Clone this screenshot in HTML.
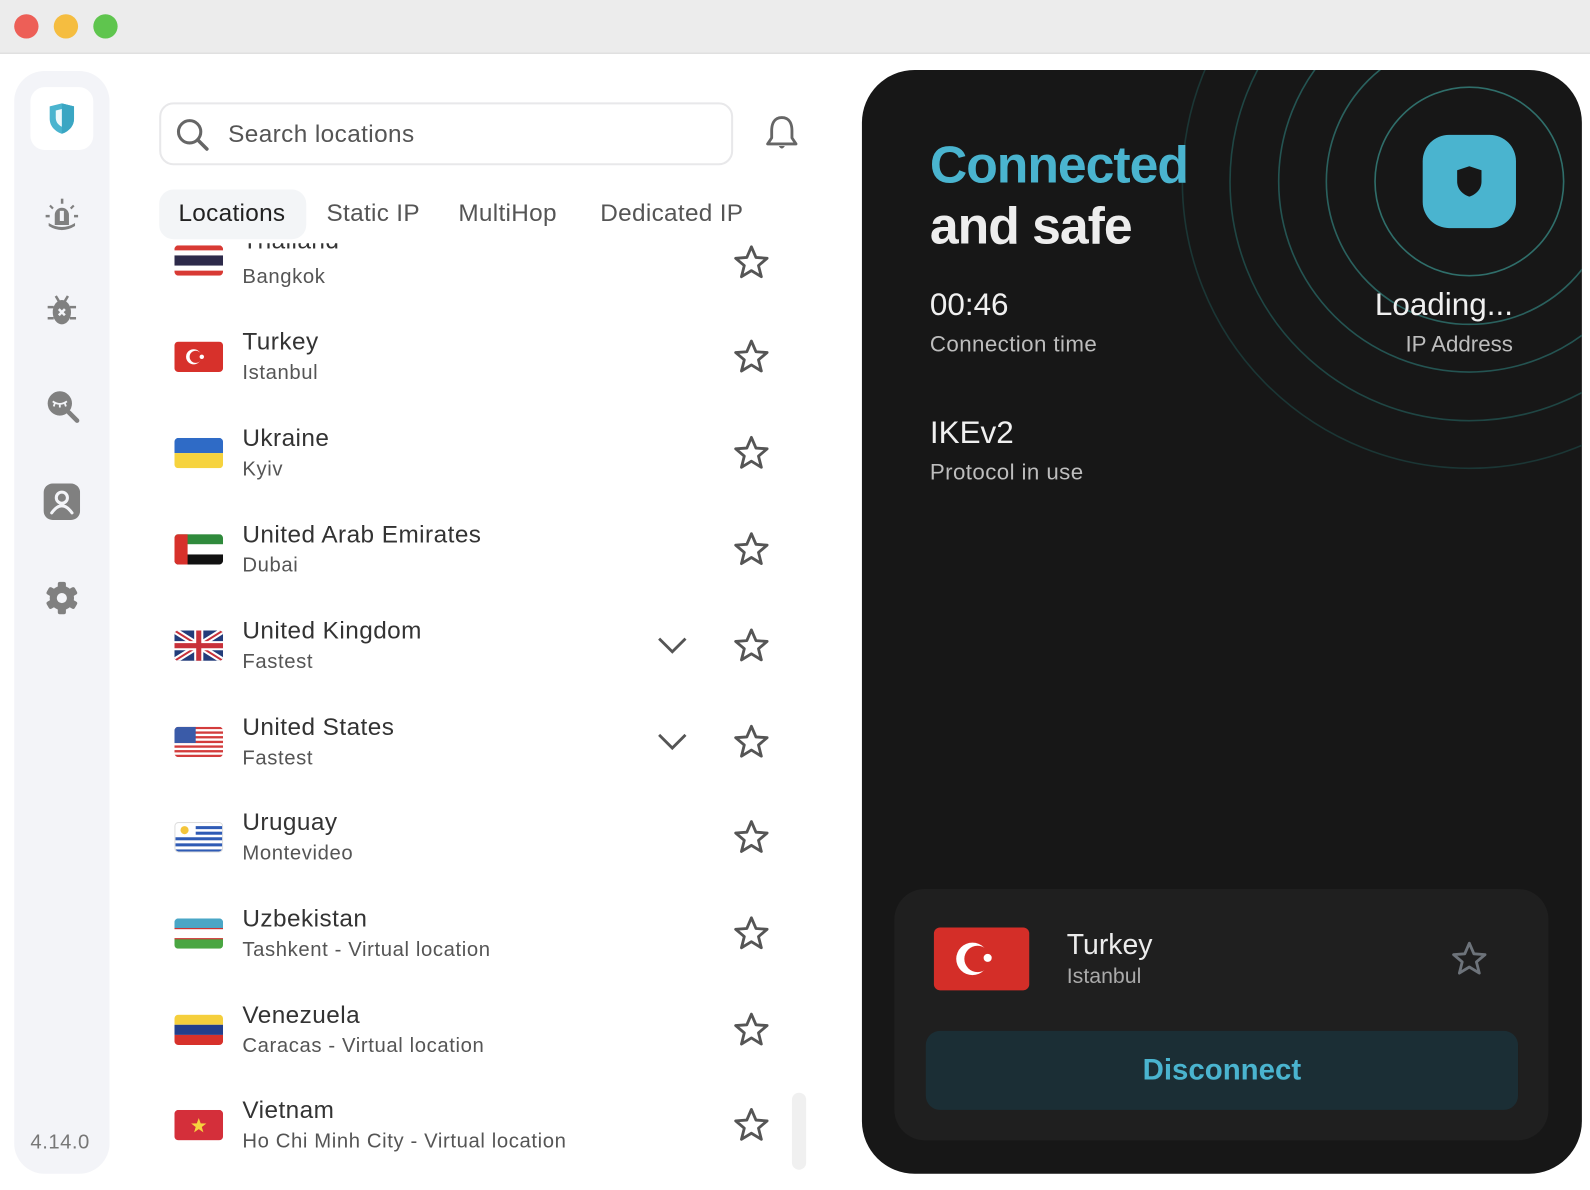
<!DOCTYPE html>
<html><head><meta charset="utf-8"><style>
*{margin:0;padding:0;box-sizing:border-box}
html,body{width:1590px;height:1190px;overflow:hidden;background:#fff;font-family:"Liberation Sans",sans-serif}
#w{position:absolute;left:0;top:0;width:1568px;height:1174px;transform-origin:0 0;transform:scale(1.01403,1.01363);background:#fff}
.a{position:absolute}
.tb{left:0;top:0;width:1568px;height:53px;background:#ececec;border-bottom:1px solid #d6d6d6}
.dot{width:24px;height:24px;border-radius:50%;top:14px}
.side{left:14px;top:70px;width:94px;height:1088px;background:#f3f4f8;border-radius:30px}
.flag{width:48px;height:30px;border-radius:4px;overflow:hidden;left:172px}
.flag svg{display:block}
.nm{left:239px;font-size:24px;color:#333;letter-spacing:.45px}
.sb{left:239px;font-size:20px;color:#555;letter-spacing:.6px}
.star{left:722px}
.tab{font-size:24px;color:#555;top:197px;letter-spacing:.3px}
</style></head><body><div id="w">
<div class="a tb"></div>
<div class="a dot" style="left:14px;background:#ed5f57"></div>
<div class="a dot" style="left:53px;background:#f5bd40"></div>
<div class="a dot" style="left:92px;background:#5fc54e"></div>

<div class="a side"></div>
<div class="a" style="left:30px;top:86px;width:62px;height:62px;background:#fff;border-radius:14px"></div>
<svg class="a" style="left:46px;top:101px" width="30" height="32" viewBox="0 0 30 32"><path d="M3 4 L15 1 L27 4 V16 C27 24 21 29 15 31 C9 29 3 24 3 16Z" fill="#4ab4cf"/><path d="M15 1 L27 4 V16 C27 24 21 29 15 31Z" fill="#3aa6c3"/><path d="M9 8 L15 6.5 V24 C11 22 9 19 9 15Z" fill="#fff" opacity=".9"/></svg>
<svg class="a" style="left:44px;top:195px" width="34" height="34" viewBox="0 0 34 34" fill="#808080"><path d="M10 27 V17 a7 7 0 0 1 14 0 V27Z"/><rect x="15" y="13" width="4" height="10" fill="#f3f4f8"/><path d="M4 25 q13 8 26 0 v3 q-13 8 -26 0Z"/><rect x="16" y="1" width="2.5" height="5"/><path d="M6 7 l3 3 -1.5 1.5 -3 -3Z M28 7 l-3 3 1.5 1.5 3 -3Z M1 17 h4 v2.5 h-4Z M29 17 h4 v2.5 h-4Z"/></svg>
<svg class="a" style="left:44px;top:289px" width="34" height="34" viewBox="0 0 34 34" fill="#808080"><ellipse cx="17" cy="19" rx="9" ry="12"/><path d="M11 3 l3 5 M23 3 l-3 5 M3 14 h6 M25 14 h6 M3 25 h6 M25 25 h6" stroke="#808080" stroke-width="2.5"/><path d="M14 16 l6 6 M20 16 l-6 6" stroke="#f3f4f8" stroke-width="2.5"/></svg>
<svg class="a" style="left:44px;top:383px" width="36" height="36" viewBox="0 0 36 36"><circle cx="15" cy="15" r="12" fill="#808080"/><path d="M24 24 l8 8" stroke="#808080" stroke-width="4.5" stroke-linecap="round"/><path d="M8 13 q7 5 14 0 M10 15 l-1 3 M15 16 v3 M20 15 l1 3" stroke="#f3f4f8" stroke-width="1.8" fill="none"/></svg>
<svg class="a" style="left:43px;top:477px" width="36" height="36" viewBox="0 0 36 36"><rect x="0" y="0" width="36" height="36" rx="9" fill="#808080"/><circle cx="18" cy="14" r="5.5" fill="none" stroke="#f3f4f8" stroke-width="3"/><path d="M8 29 q10 -14 20 0" fill="none" stroke="#f3f4f8" stroke-width="3" stroke-linecap="round"/></svg>
<svg class="a" style="left:44px;top:573px" width="34" height="34" viewBox="0 0 34 34"><g fill="#808080" transform="translate(17 17)"><rect x="-4" y="-16" width="8" height="32" rx="2"/><rect x="-4" y="-16" width="8" height="32" rx="2" transform="rotate(60)"/><rect x="-4" y="-16" width="8" height="32" rx="2" transform="rotate(120)"/><circle r="12"/></g><circle cx="17" cy="17" r="5" fill="#f3f4f8"/></svg>
<div class="a" style="left:30px;top:1116px;font-size:20px;color:#777;letter-spacing:.5px">4.14.0</div>

<div class="a" style="left:157px;top:101px;width:566px;height:62px;border:2px solid #e8e8ea;border-radius:14px"></div>
<svg class="a" style="left:172px;top:115px" width="36" height="36" viewBox="0 0 36 36"><circle cx="15" cy="15" r="11" fill="none" stroke="#666" stroke-width="3"/><path d="M23 23 l9 9" stroke="#666" stroke-width="3.5" stroke-linecap="round"/></svg>
<div class="a" style="left:225px;top:119px;font-size:24px;color:#555;letter-spacing:.4px">Search locations</div>
<svg class="a" style="left:752px;top:112px" width="38" height="40" viewBox="0 0 38 40"><path d="M19 4 C11 4 9 11 9 17 V24 L5 30 H33 L29 24 V17 C29 11 27 4 19 4Z" fill="none" stroke="#666" stroke-width="2.8" stroke-linejoin="round"/><path d="M16 32 q3 5 6 0" fill="#666"/></svg>

<div class="a" style="left:157px;top:187px;width:145px;height:49px;background:#f3f5f7;border-radius:14px"></div>
<div class="a tab" style="left:176px;color:#222">Locations</div>
<div class="a tab" style="left:322px">Static IP</div>
<div class="a tab" style="left:452px">MultiHop</div>
<div class="a tab" style="left:592px">Dedicated IP</div>

<div class="a" style="left:150px;top:240px;width:640px;height:934px;overflow:hidden">
<div style="position:relative;left:-150px;top:-240px">
<div class="a nm" style="top:224px">Thailand</div>
<div class="a flag" style="top:242px"><svg width="48" height="30"><rect width="48" height="30" fill="#d83a34"/><rect y="5" width="48" height="20" fill="#fff"/><rect y="10" width="48" height="10" fill="#2d2a4a"/></svg></div>
</div></div>
<div class="a sb" style="top:262px">Bangkok</div>
<svg class="a star" style="top:240px" width="38" height="38" viewBox="0 0 38 38"><path id="st" d="M19 3.5 L23.5 14 L34.5 14.8 L26 22 L28.8 33 L19 27 L9.2 33 L12 22 L3.5 14.8 L14.5 14Z" fill="none" stroke="#555" stroke-width="2.8" stroke-linejoin="round"/></svg>

<div class="a flag" style="top:337px"><svg width="48" height="30"><rect width="48" height="30" fill="#d7312b"/><circle cx="19" cy="15" r="7.5" fill="#fff"/><circle cx="21" cy="15" r="6" fill="#d7312b"/><circle cx="27" cy="15" r="2.2" fill="#fff"/></svg></div>
<div class="a nm" style="top:324px">Turkey</div><div class="a sb" style="top:357px">Istanbul</div>
<svg class="a star" style="top:333px" width="38" height="38" viewBox="0 0 38 38"><use href="#st"/></svg>

<div class="a flag" style="top:432px"><svg width="48" height="30"><rect width="48" height="15" fill="#2f6bc6"/><rect y="15" width="48" height="15" fill="#f6d33e"/></svg></div>
<div class="a nm" style="top:419px">Ukraine</div><div class="a sb" style="top:452px">Kyiv</div>
<svg class="a star" style="top:428px" width="38" height="38" viewBox="0 0 38 38"><use href="#st"/></svg>

<div class="a flag" style="top:527px"><svg width="48" height="30"><rect width="48" height="10" fill="#2f8a3c"/><rect y="10" width="48" height="10" fill="#fff"/><rect y="20" width="48" height="10" fill="#111"/><rect width="13" height="30" fill="#d7312b"/></svg></div>
<div class="a nm" style="top:514px">United Arab Emirates</div><div class="a sb" style="top:547px">Dubai</div>
<svg class="a star" style="top:523px" width="38" height="38" viewBox="0 0 38 38"><use href="#st"/></svg>

<div class="a flag" style="top:622px"><svg width="48" height="30"><rect width="48" height="30" fill="#233c7a"/><path d="M0 0 L48 30 M48 0 L0 30" stroke="#fff" stroke-width="6"/><path d="M0 0 L48 30 M48 0 L0 30" stroke="#c8313a" stroke-width="2"/><path d="M24 0 V30 M0 15 H48" stroke="#fff" stroke-width="9"/><path d="M24 0 V30 M0 15 H48" stroke="#c8313a" stroke-width="5"/></svg></div>
<div class="a nm" style="top:609px">United Kingdom</div><div class="a sb" style="top:642px">Fastest</div>
<svg class="a" style="left:648px;top:626px" width="30" height="22" viewBox="0 0 30 22"><path d="M2 4 L15 17 L28 4" fill="none" stroke="#555" stroke-width="2.8"/></svg>
<svg class="a star" style="top:618px" width="38" height="38" viewBox="0 0 38 38"><use href="#st"/></svg>

<div class="a flag" style="top:717px"><svg width="48" height="30"><rect width="48" height="30" fill="#fff"/><g fill="#d33c3c"><rect y="0" width="48" height="2.3"/><rect y="4.6" width="48" height="2.3"/><rect y="9.2" width="48" height="2.3"/><rect y="13.8" width="48" height="2.3"/><rect y="18.4" width="48" height="2.3"/><rect y="23" width="48" height="2.3"/><rect y="27.6" width="48" height="2.4"/></g><rect width="21" height="16" fill="#3a5ba8"/></svg></div>
<div class="a nm" style="top:704px">United States</div><div class="a sb" style="top:737px">Fastest</div>
<svg class="a" style="left:648px;top:721px" width="30" height="22" viewBox="0 0 30 22"><path d="M2 4 L15 17 L28 4" fill="none" stroke="#555" stroke-width="2.8"/></svg>
<svg class="a star" style="top:713px" width="38" height="38" viewBox="0 0 38 38"><use href="#st"/></svg>

<div class="a flag" style="top:811px;border:1px solid #ddd"><svg width="48" height="30"><rect width="48" height="30" fill="#fff"/><g fill="#2f5bb5"><rect x="0" y="14" width="48" height="3"/><rect x="0" y="20" width="48" height="3"/><rect x="0" y="26" width="48" height="3"/><rect x="20" y="3" width="28" height="3"/><rect x="20" y="8.5" width="28" height="3"/></g><circle cx="9" cy="7" r="4" fill="#f4c53a"/></svg></div>
<div class="a nm" style="top:798px">Uruguay</div><div class="a sb" style="top:831px">Montevideo</div>
<svg class="a star" style="top:807px" width="38" height="38" viewBox="0 0 38 38"><use href="#st"/></svg>

<div class="a flag" style="top:906px"><svg width="48" height="30"><rect width="48" height="10" fill="#4aa6c6"/><rect y="10" width="48" height="10" fill="#fff"/><rect y="20" width="48" height="10" fill="#4aa642"/><rect y="9.5" width="48" height="1.2" fill="#c33"/><rect y="19.5" width="48" height="1.2" fill="#c33"/></svg></div>
<div class="a nm" style="top:893px">Uzbekistan</div><div class="a sb" style="top:926px">Tashkent - Virtual location</div>
<svg class="a star" style="top:902px" width="38" height="38" viewBox="0 0 38 38"><use href="#st"/></svg>

<div class="a flag" style="top:1001px"><svg width="48" height="30"><rect width="48" height="10" fill="#f5cf3c"/><rect y="10" width="48" height="10" fill="#233f8c"/><rect y="20" width="48" height="10" fill="#d7312b"/></svg></div>
<div class="a nm" style="top:988px">Venezuela</div><div class="a sb" style="top:1021px">Caracas - Virtual location</div>
<svg class="a star" style="top:997px" width="38" height="38" viewBox="0 0 38 38"><use href="#st"/></svg>

<div class="a flag" style="top:1095px"><svg width="48" height="30"><rect width="48" height="30" fill="#d42f3a"/><path d="M24 8 L25.9 13.3 L31.5 13.4 L27 16.8 L28.6 22.2 L24 19 L19.4 22.2 L21 16.8 L16.5 13.4 L22.1 13.3Z" fill="#f6d33e"/></svg></div>
<div class="a nm" style="top:1082px">Vietnam</div><div class="a sb" style="top:1115px">Ho Chi Minh City - Virtual location</div>
<svg class="a star" style="top:1091px" width="38" height="38" viewBox="0 0 38 38"><use href="#st"/></svg>
<div class="a" style="left:781px;top:1078px;width:14px;height:76px;background:#f0f0f0;border-radius:7px"></div>

<div class="a" style="left:850px;top:69px;width:710px;height:1089px;background:#171717;border-radius:52px;overflow:hidden">
<svg class="a" style="left:0;top:0" width="710" height="1089"><g fill="none" stroke-width="1.6"><circle cx="599" cy="110" r="93" stroke="#2f6e6a"/><circle cx="599" cy="110" r="141" stroke="#2a615e"/><circle cx="599" cy="110" r="188" stroke="#245452"/><circle cx="599" cy="110" r="236" stroke="#1f4644"/><circle cx="599" cy="110" r="283" stroke="#1b3635"/></g></svg>
</div>
<div class="a" style="left:1403px;top:133px;width:92px;height:92px;background:#4ab4cf;border-radius:26px"></div>
<svg class="a" style="left:1435px;top:163px" width="28" height="32" viewBox="0 0 28 32"><path d="M2 5 L14 1 L26 5 V16 C26 24 20 29 14 31 C8 29 2 24 2 16Z" fill="#171717"/></svg>
<div class="a" style="left:917px;top:133px;font-size:51px;font-weight:bold;color:#4ab4cf;letter-spacing:-1px">Connected</div>
<div class="a" style="left:917px;top:193px;font-size:51px;font-weight:bold;color:#ededed;letter-spacing:-1px">and safe</div>
<div class="a" style="left:917px;top:283px;font-size:31px;color:#f0f0f0">00:46</div>
<div class="a" style="left:917px;top:327px;font-size:22px;color:#bdbdbd;letter-spacing:.4px">Connection time</div>
<div class="a" style="left:917px;top:409px;font-size:31px;color:#f0f0f0">IKEv2</div>
<div class="a" style="left:917px;top:453px;font-size:22px;color:#bdbdbd;letter-spacing:.4px">Protocol in use</div>
<div class="a" style="left:1292px;width:200px;text-align:right;top:283px;font-size:31px;color:#f0f0f0">Loading...</div>
<div class="a" style="left:1292px;width:200px;text-align:right;top:327px;font-size:22px;color:#bdbdbd">IP Address</div>

<div class="a" style="left:882px;top:877px;width:645px;height:248px;background:#1f1f1f;border-radius:30px"></div>
<div class="a" style="left:921px;top:915px;width:94px;height:62px;background:#d42e28;border-radius:6px"></div>
<svg class="a" style="left:921px;top:915px" width="94" height="62"><circle cx="38" cy="31" r="16" fill="#fff"/><circle cx="43" cy="31" r="13" fill="#d42e28"/><circle cx="53" cy="30" r="4" fill="#fff"/></svg>
<div class="a" style="left:1052px;top:916px;font-size:28px;color:#ececec">Turkey</div>
<div class="a" style="left:1052px;top:952px;font-size:21px;color:#aaa">Istanbul</div>
<svg class="a" style="left:1430px;top:927px" width="38" height="38" viewBox="0 0 38 38"><path d="M19 3.5 L23.5 14 L34.5 14.8 L26 22 L28.8 33 L19 27 L9.2 33 L12 22 L3.5 14.8 L14.5 14Z" fill="none" stroke="#6d737a" stroke-width="2.8" stroke-linejoin="round"/></svg>
<div class="a" style="left:913px;top:1017px;width:584px;height:78px;background:#1b2e35;border-radius:14px;text-align:center;line-height:78px;font-size:29px;font-weight:bold;color:#4ab4cf">Disconnect</div>
</div></body></html>
